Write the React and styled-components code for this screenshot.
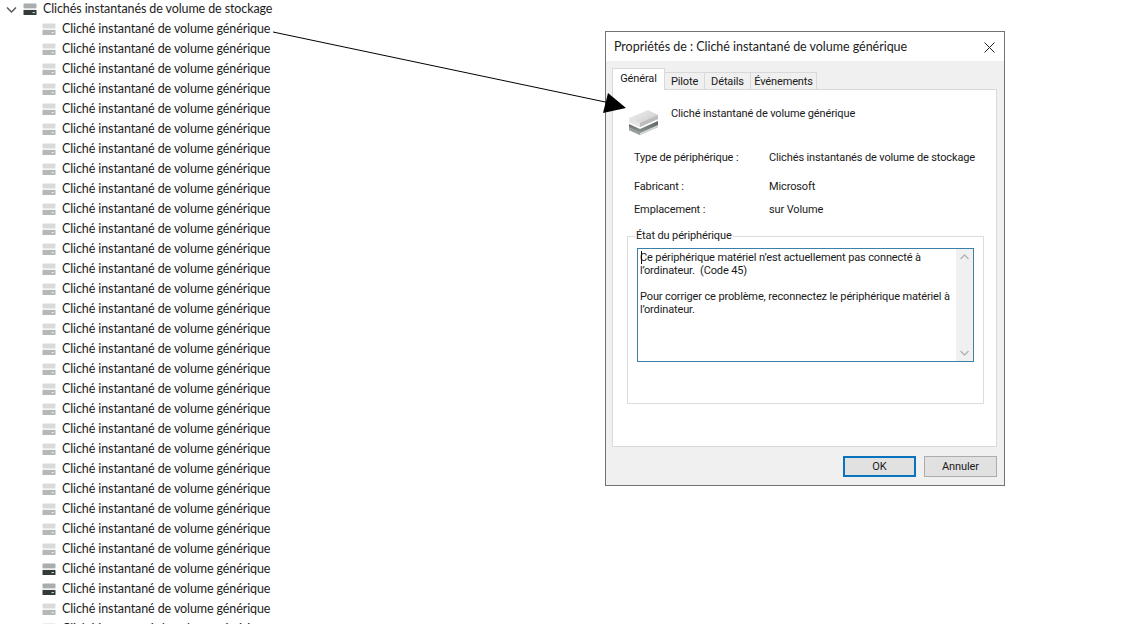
import React from "react";
import styled, { createGlobalStyle } from "styled-components";

const Global = createGlobalStyle`
  html, body { margin: 0; padding: 0; background: #fff; }
  body { width: 1144px; height: 624px; overflow: hidden; }
`;

const casual = `"Lato", "Open Sans", sans-serif`;
const ui = `"Roboto", "Liberation Sans", Arial, sans-serif`;

const Page = styled.div`
  position: relative;
  width: 1144px;
  height: 624px;
  overflow: hidden;
  background: #fff;
`;

const Tree = styled.ul`
  list-style: none;
  margin: -1px 0 0;
  padding: 0;
  font: 12.5px/20px ${casual};
  letter-spacing: -0.1px;
  color: #1c1c1c;
`;

const Row = styled.li`
  display: flex;
  align-items: center;
  height: 20px;
  white-space: nowrap;
  padding-left: ${(p) => (p.$root ? 6 : 41)}px;
  gap: 5px;
`;

const Chevron = styled.svg`
  width: 11px;
  height: 11px;
  flex: none;
`;

const DriveSvg = styled.svg`
  width: 16px;
  height: 14px;
  flex: none;
`;

function Drive({ tone }) {
  const c = {
    faint: { top: "#d9dbdb", line: "#eeeeee", bot: "#b4b8b8", led: "#e4e8e4" },
    dark: { top: "#a9adad", line: "#e8e8e8", bot: "#34393a", led: "#a8e0c0" },
  }[tone];
  return (
    <DriveSvg viewBox="0 0 16 14">
      <rect x="1.5" y="1.5" width="13" height="5" rx="1" fill={c.top} />
      <rect x="1.5" y="6.5" width="13" height="1.2" fill={c.line} />
      <rect x="1.5" y="8" width="13" height="5" rx="0.6" fill={c.bot} />
      <rect x="10.5" y="10" width="2.4" height="1.1" fill={c.led} />
    </DriveSvg>
  );
}

const ArrowLayer = styled.svg`
  position: absolute;
  left: 0;
  top: 0;
  width: 1144px;
  height: 624px;
  pointer-events: none;
  z-index: 2;
`;

const Dialog = styled.section`
  position: absolute;
  left: 605px;
  top: 31px;
  width: 400px;
  height: 455px;
  box-sizing: border-box;
  border: 1px solid #737373;
  background: #f0f0f0;
  display: flex;
  flex-direction: column;
  font: 11px/13px ${ui};
  letter-spacing: -0.13px;
  color: #1a1a1a;
  z-index: 1;
`;

const TitleBar = styled.header`
  height: 29px;
  box-sizing: border-box;
  flex: none;
  background: #fff;
  display: flex;
  align-items: center;
  justify-content: space-between;
  padding: 1px 9px 0 8px;
`;

const Title = styled.h1`
  margin: 0;
  font: 400 12.5px/16px ${casual};
  letter-spacing: -0.03px;
  color: #1c1c1c;
`;

const CloseIcon = styled.svg`
  width: 11px;
  height: 11px;
  display: block;
`;

const Body = styled.div`
  flex: 1;
  display: flex;
  flex-direction: column;
  padding: 8px 8px 0 6px;
  min-height: 0;
`;

const Tabs = styled.div`
  display: flex;
  align-items: flex-end;
  height: 21px;
  position: relative;
  z-index: 1;
  margin-bottom: -1px;
`;

const Tab = styled.div`
  box-sizing: border-box;
  width: ${(p) => p.$w}px;
  height: ${(p) => (p.$active ? 22 : 18)}px;
  display: flex;
  align-items: center;
  justify-content: center;
  border: 1px solid #d9d9d9;
  border-bottom: ${(p) => (p.$active ? "none" : "1px solid #d9d9d9")};
  margin-left: ${(p) => (p.$first ? 0 : -1)}px;
  background: ${(p) => (p.$active ? "#fff" : "#f0f0f0")};
  padding-bottom: ${(p) => (p.$active ? 3 : 0)}px;
`;

const Panel = styled.div`
  box-sizing: border-box;
  width: 385px;
  height: 358px;
  flex: none;
  background: #fff;
  border: 1px solid #d9d9d9;
  padding: 11px 11px 0 14px;
`;

const Head = styled.div`
  display: flex;
  align-items: flex-start;
  height: 50px;
  gap: 11px;
  padding-left: 1px;
`;

const BigDrive = styled.svg`
  width: 32px;
  height: 32px;
  flex: none;
  margin-top: 4px;
`;

const HeadName = styled.div`
  padding-top: 6px;
`;

const Info = styled.dl`
  margin: 0;
  display: grid;
  grid-template-columns: 135px 1fr;
  padding-left: 7px;
`;

const Label = styled.dt`
  margin: 0 0 ${(p) => p.$gap}px;
  height: 13px;
`;

const Value = styled.dd`
  margin: 0 0 ${(p) => p.$gap}px;
  height: 13px;
  white-space: nowrap;
`;

const Group = styled.fieldset`
  box-sizing: border-box;
  width: 357px;
  height: 175px;
  margin: 13px 0 0;
  padding: 5px 10px 0 9px;
  border: 1px solid #dcdcdc;
  min-width: 0;
`;

const Legend = styled.legend`
  padding: 0 1px;
  margin-left: -2px;
  line-height: 14px;
`;

const TextBox = styled.div`
  box-sizing: border-box;
  width: 337px;
  height: 114px;
  border: 1px solid #3a80a8;
  display: flex;
  background: #fff;
`;

const TextContent = styled.div`
  flex: 1;
  min-width: 0;
  padding: 2px 4px 0 2px;
  position: relative;
`;

const Caret = styled.span`
  position: absolute;
  left: 3px;
  top: 2px;
  width: 1px;
  height: 13px;
  background: #111;
`;

const Line = styled.p`
  margin: 0;
  height: 13px;
  white-space: pre;
`;

const ScrollBar = styled.div`
  width: 17px;
  flex: none;
  background: #f0f0f0;
  display: flex;
  flex-direction: column;
  justify-content: space-between;
  align-items: center;
  padding: 5px 0;
`;

const ScrollArrow = styled.svg`
  width: 9px;
  height: 6px;
  display: block;
`;

const Footer = styled.footer`
  display: flex;
  justify-content: flex-end;
  gap: 8px;
  padding-top: 9px;
  margin-right: -1px;
`;

const Button = styled.button`
  box-sizing: border-box;
  width: 73px;
  height: 21px;
  padding: 0;
  background: #e1e1e1;
  border: ${(p) => (p.$primary ? "2px solid #0b72bd" : "1px solid #adadad")};
  font: 11px/13px ${ui};
  letter-spacing: -0.1px;
  color: #1a1a1a;
`;

const rows = Array.from({ length: 31 }, (_, i) => i);

export default function App() {
  return (
    <Page>
      <Global />
      <Tree>
        <Row $root>
          <Chevron viewBox="0 0 11 11">
            <path d="M1 3.5 L5.5 8 L10 3.5" fill="none" stroke="#555" strokeWidth="1.4" />
          </Chevron>
          <Drive tone="dark" />
          <span>Clichés instantanés de volume de stockage</span>
        </Row>
        {rows.map((i) => (
          <Row key={i}>
            <Drive tone={i === 27 || i === 28 ? "dark" : "faint"} />
            <span>Cliché instantané de volume générique</span>
          </Row>
        ))}
      </Tree>

      <Dialog>
        <TitleBar>
          <Title>Propriétés de : Cliché instantané de volume générique</Title>
          <CloseIcon viewBox="0 0 11 11">
            <path d="M0.5 0.5 L10.5 10.5 M10.5 0.5 L0.5 10.5" stroke="#222" strokeWidth="1" fill="none" />
          </CloseIcon>
        </TitleBar>
        <Body>
          <Tabs>
            <Tab $active $first $w={53}>Général</Tab>
            <Tab $w={41}>Pilote</Tab>
            <Tab $w={47}>Détails</Tab>
            <Tab $w={67}>Événements</Tab>
          </Tabs>
          <Panel>
            <Head>
              <BigDrive viewBox="0 0 32 32">
                <defs>
                  <linearGradient id="topFace" x1="0" y1="0" x2="1" y2="1">
                    <stop offset="0" stopColor="#f2f2f2" />
                    <stop offset="1" stopColor="#c4c4c4" />
                  </linearGradient>
                  <linearGradient id="lowFace" x1="0" y1="0" x2="0" y2="1">
                    <stop offset="0" stopColor="#5a5f5f" />
                    <stop offset="1" stopColor="#9aa09f" />
                  </linearGradient>
                </defs>
                <path d="M1 13 L20 5 L30 10 L30 14 L12 22 L1 17 Z" fill="url(#topFace)" />
                <path d="M1 13 L12 18 L12 22 L1 17 Z" fill="#e4e4e4" />
                <path d="M12 18 L30 10 L30 14 L12 22 Z" fill="#bdbdbd" />
                <path d="M1 19 L12 24 L30 16 L30 22 L12 30 L1 25 Z" fill="url(#lowFace)" />
                <path d="M1 22 L12 27 L12 30 L1 25 Z" fill="#9a9e9d" />
                <path d="M12 30 L30 22 L30 20 L12 28 Z" fill="#d5d8d7" />
              </BigDrive>
              <HeadName>Cliché instantané de volume générique</HeadName>
            </Head>
            <Info>
              <Label $gap={16}>Type de périphérique :</Label>
              <Value $gap={16}>Clichés instantanés de volume de stockage</Value>
              <Label $gap={10}>Fabricant :</Label>
              <Value $gap={10}>Microsoft</Value>
              <Label $gap={0}>Emplacement :</Label>
              <Value $gap={0}>sur Volume</Value>
            </Info>
            <Group>
              <Legend>État du périphérique</Legend>
              <TextBox>
                <TextContent>
                  <Caret />
                  <Line>Ce périphérique matériel n’est actuellement pas connecté à</Line>
                  <Line>l’ordinateur.  (Code 45)</Line>
                  <Line> </Line>
                  <Line>Pour corriger ce problème, reconnectez le périphérique matériel à</Line>
                  <Line>l’ordinateur.</Line>
                </TextContent>
                <ScrollBar>
                  <ScrollArrow viewBox="0 0 9 6">
                    <path d="M0.5 5 L4.5 1 L8.5 5" fill="none" stroke="#b4b4b4" strokeWidth="1.4" />
                  </ScrollArrow>
                  <ScrollArrow viewBox="0 0 9 6">
                    <path d="M0.5 1 L4.5 5 L8.5 1" fill="none" stroke="#b4b4b4" strokeWidth="1.4" />
                  </ScrollArrow>
                </ScrollBar>
              </TextBox>
            </Group>
          </Panel>
          <Footer>
            <Button $primary>OK</Button>
            <Button>Annuler</Button>
          </Footer>
        </Body>
      </Dialog>

      <ArrowLayer viewBox="0 0 1144 624">
        <path d="M273 32 L610 103" stroke="#000" strokeWidth="1" fill="none" />
        <path d="M626 108 L608 93 L603 113 Z" fill="#000" />
      </ArrowLayer>
    </Page>
  );
}
